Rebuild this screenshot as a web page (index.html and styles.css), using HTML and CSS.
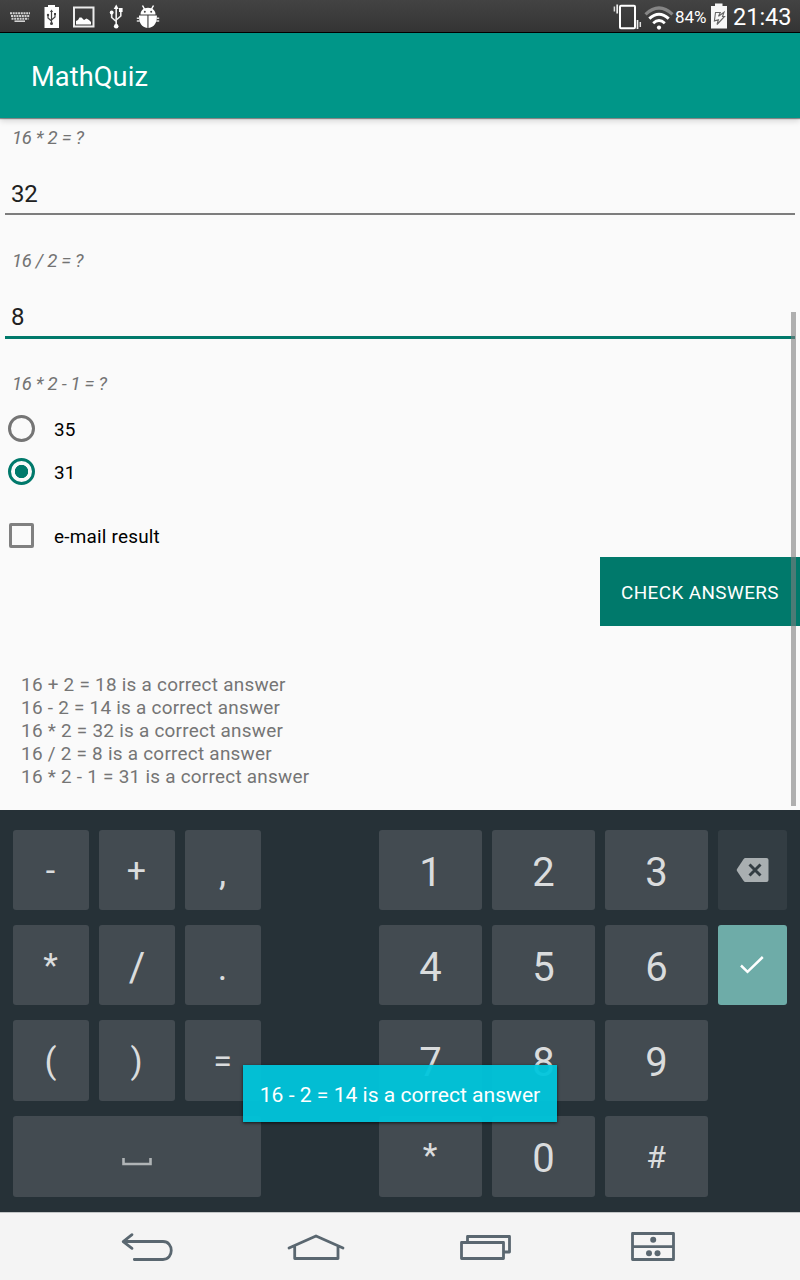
FILE: index.html
```html
<!DOCTYPE html>
<html lang="en">
<head>
<meta charset="utf-8">
<title>MathQuiz</title>
<link rel="stylesheet" href="styles.css">
</head>
<body>
<div class="screen">
  <header class="status">
    <svg class="status-icons" width="170" height="32" viewBox="0 0 170 32">
      <g stroke="#d2d2d2" stroke-width="2" fill="none">
        <path d="M10 13.200H30" stroke-dasharray="2 .7"/>
        <path d="M11 16H29.500" stroke-dasharray="2 .7"/>
        <path d="M11.500 18.700H28.500" stroke-dasharray="2 .7"/>
        <path d="M14.500 21.200H25" stroke-width="1.600"/>
      </g>
      <path d="M44.500 7h3.500V5h7v2h4v21H44.500z" fill="#fff"/>
      <g stroke="#444" fill="none" stroke-width="1.200">
        <path d="M51.500 11v13M48 15v3l3.500 3M55 14v3l-3.500 3"/>
        <path d="M49.900 12l1.600-2.500 1.600 2.500z" fill="#444" stroke="none"/>
        <circle cx="51.500" cy="23.500" r="1.500" fill="#444" stroke="none"/>
        <circle cx="48" cy="15" r="1.200" fill="#444" stroke="none"/>
        <path d="M54 13h2v2h-2z" fill="#444" stroke="none"/>
      </g>
      <rect x="74" y="7.500" width="19.500" height="19" fill="none" stroke="#ececec" stroke-width="2"/>
      <path d="M76 24.500v-3.500l2-1 1.500-2.500h2l2.500 2.500 2.500-1.500 2.500 1.500 2 2v2.500z" fill="#fff"/>
      <g stroke="#efefef" fill="none" stroke-width="1.600">
        <path d="M116.200 8v18M111.700 13v4.500l4.500 4M120.800 11v5l-4.600 4"/>
        <path d="M113.700 9l2.500-4.500 2.500 4.500z" fill="#fff" stroke="none"/>
        <circle cx="116.200" cy="26.300" r="2.300" fill="#fff" stroke="none"/>
        <circle cx="111.700" cy="12.500" r="1.900" fill="#fff" stroke="none"/>
        <path d="M119 8h3.600v4H119z" fill="#fff" stroke="none"/>
      </g>
      <path d="M140.500 14.500c0-3.800 2.800-6.700 7.500-6.700s7.500 2.900 7.500 6.700z" fill="#fff"/>
      <path d="M142.500 5.500l2.500 4.500M153.500 5.500L151 10" stroke="#fff" stroke-width="1.500"/>
      <circle cx="144.800" cy="11.800" r="1" fill="#444"/><circle cx="151.200" cy="11.800" r="1" fill="#444"/>
      <path d="M139 15.500h8.400V28c-5.500-.6-8.800-5-8.400-12.500zM148.500 15.500h8.400c.400 7.500-2.900 11.900-8.400 12.500z" fill="#fff"/>
      <path d="M136.800 18.200h3M136.800 21h3M156.200 18.200h3M156.200 21h3" stroke="#ddd" stroke-width="1.500"/>
    </svg>
    <div class="status-right">
      <svg width="64" height="32" viewBox="610 0 64 32">
        <rect x="620" y="5.800" width="15" height="22.500" rx="1" fill="none" stroke="#fff" stroke-width="2"/>
        <path d="M617.200 4.500v9M637.500 20v9" stroke="#eee" stroke-width="1.700"/>
        <path d="M614.400 6.500v5M640.300 22v5" stroke="#ddd" stroke-width="1.500"/>
        <path d="M645.500 14.300Q659 1.700 672.500 14.300" stroke="#858585" stroke-width="3.200" fill="none"/>
        <path d="M649.300 18.700Q659 9.800 668.700 18.700" stroke="#fff" stroke-width="3" fill="none"/>
        <path d="M653.200 23.200Q659 17.700 664.800 23.200" stroke="#fff" stroke-width="2.800" fill="none"/>
        <circle cx="659" cy="27.600" r="2.100" fill="#fff"/>
      </svg>
      <span class="percent">84%</span>
      <svg class="battery" width="18" height="32" viewBox="710 0 18 32">
        <path d="M711 6h4V3.500h7.500V6h4.500v22.500h-16z" fill="#f7f7f7"/>
        <path d="M715.500 12.500h4.800l-1.800 3.800 5.500-4-1.500 4.200h2l-7.500 8 1.400-4.800-4 1.200z" fill="none" stroke="#666" stroke-width="1.100"/>
      </svg>
      <span class="clock">21:43</span>
    </div>
  </header>
  <div class="appbar"><h1 class="title">MathQuiz</h1></div>
  <main class="content">
    <p class="question">16 * 2 = ?</p>
    <div class="field">32</div>
    <p class="question">16 / 2 = ?</p>
    <div class="field field-active">8</div>
    <p class="question question-last">16 * 2 - 1 = ?</p>
    <div class="option"><span class="radio"></span><span class="label">35</span></div>
    <div class="option"><span class="radio radio-on"></span><span class="label">31</span></div>
    <div class="option option-check"><span class="check"></span><span class="label">e-mail result</span></div>
    <button class="submit">CHECK ANSWERS</button>
    <div class="results">
      <div>16 + 2 = 18 is a correct answer</div>
      <div>16 - 2 = 14 is a correct answer</div>
      <div>16 * 2 = 32 is a correct answer</div>
      <div>16 / 2 = 8 is a correct answer</div>
      <div>16 * 2 - 1 = 31 is a correct answer</div>
    </div>
    <div class="scrollbar"></div>
  </main>
  <section class="keyboard">
    <div class="key sym">-</div><div class="key sym">+</div><div class="key sym sym-low">,</div><i></i>
    <div class="key">1</div><div class="key">2</div><div class="key">3</div>
    <div class="key key-dim"><svg width="34" height="26" viewBox="0 0 34 26"><path d="M9.500 1H30.500a2 2 0 0 1 2 2V23a2 2 0 0 1-2 2H9.500Q8.300 25 7.500 23.800L1 14Q.5 13 1 12L7.500 2.200Q8.300 1 9.500 1z" fill="#a9afb1"/><path d="M13.500 7.500l11 11M24.500 7.500l-11 11" stroke="#333d43" stroke-width="2.900"/></svg></div>
    <div class="key sym">*</div><div class="key sym-slash">/</div><div class="key sym sym-low">.</div><i></i>
    <div class="key">4</div><div class="key">5</div><div class="key">6</div>
    <div class="key key-enter"><svg width="24" height="18" viewBox="0 0 24 18"><path d="M1 9.500l6.500 6.300L22.800 1" fill="none" stroke="#fff" stroke-width="2.500"/></svg></div>
    <div class="key sym sym-paren">(</div><div class="key sym sym-paren">)</div><div class="key sym">=</div><i></i>
    <div class="key">7</div><div class="key">8</div><div class="key">9</div><i></i>
    <div class="key key-space"><svg width="30" height="8" viewBox="0 0 30 8"><path d="M1.500 0v6H28.500V0" fill="none" stroke="#b0b4b6" stroke-width="2.600"/></svg></div><i></i>
    <div class="key sym sym-star">*</div><div class="key">0</div><div class="key sym sym-hash">#</div>
  </section>
  <nav class="nav">
    <svg width="800" height="67" viewBox="0 1213 800 67" fill="none" stroke="#5a6770" stroke-width="2.800" stroke-linecap="round" stroke-linejoin="round">
      <path d="M132 1234.700l-8.800 6.900 8.800 6.700M123.500 1241.500H163c11 0 11 18 0 18H134.300"/>
      <path d="M289 1248l27-12 27 12M294.700 1247v11.500h43.300V1247"/>
      <path d="M467.500 1241v-4.500h42v15.500h-5M461.500 1242.500h42v16h-42z"/>
      <path d="M632.500 1233.500h41v26h-41zM633 1246.700h40"/>
      <g fill="#5a6770" stroke="none"><circle cx="653.200" cy="1239.800" r="3"/><circle cx="649" cy="1253.200" r="3"/><circle cx="657.500" cy="1253.200" r="3"/></g>
    </svg>
  </nav>
  <div class="toast">16 - 2 = 14 is a correct answer</div>
</div>
</body>
</html>
```
FILE: styles.css
```css
* { box-sizing: border-box; }
body { margin: 0; font-family: Roboto, "Liberation Sans", sans-serif; }
.screen { position: relative; width: 800px; height: 1280px; overflow: hidden; background: #fafafa; display: flex; flex-direction: column; }
.status { height: 33px; flex: none; display: flex; justify-content: space-between; background: linear-gradient(#434343, #343434); border-bottom: 1px solid #000; color: #fff; }
.status-right { display: flex; align-items: center; width: 190px; }
.status-right svg { flex: none; }
.percent { font-size: 17px; width: 36px; padding-left: 1px; padding-top: 2px; white-space: nowrap; }
.clock { font-size: 23.500px; padding-left: 5px; padding-top: 2px; }
.appbar { height: 85px; flex: none; position: relative; z-index: 1; display: flex; align-items: center; padding: 2px 0 0 31px; background: #009688; box-shadow: 0 1px 1px rgba(0,0,0,.4), 0 3px 6px rgba(0,0,0,.15); }
.title { margin: 0; font-size: 27.200px; font-weight: 400; color: #fff; letter-spacing: .1px; }
.content { position: relative; height: 692px; flex: none; display: flex; flex-direction: column; }
.question { margin: 0; height: 39px; padding: 9px 0 0 12px; font-size: 18.600px; line-height: 23px; font-style: italic; color: #737373; letter-spacing: -.32px; }
.field { height: 58px; margin: 0 5px 26px; padding: 22px 0 0 6px; font-size: 24px; line-height: 31px; color: #212121; letter-spacing: -.3px; border-bottom: 2px solid #7d7d7d; }
.field-active { height: 59px; margin-bottom: 25px; border-bottom: 3px solid #00796b; }
.question-last { height: 43px; }
.option { height: 43px; padding-left: 8px; display: flex; align-items: center; gap: 19px; font-size: 18.900px; color: #000; letter-spacing: .22px; }
.label { padding-top: 2px; }
.radio { width: 27px; height: 27px; border: 3px solid #757575; border-radius: 50%; }
.radio-on { border-color: #00796b; background: radial-gradient(circle, #00796b 6.300px, transparent 7px); }
.option-check { margin-top: 21px; }
.check { width: 25px; height: 25px; margin: 0 1px; border: 3px solid #808080; border-radius: 2px; }
.submit { align-self: flex-end; width: 200px; height: 69px; border: 0; padding: 2px 0 0; background: #00796b; color: #fff; font: 18.900px Roboto, sans-serif; letter-spacing: .4px; }
.results { padding: 47px 0 0 21px; font-size: 18.900px; line-height: 23px; color: #757575; letter-spacing: .26px; }
.scrollbar { position: absolute; left: 791px; top: 194px; width: 5px; height: 494px; background: rgba(125,125,125,.6); }
.keyboard { height: 402px; flex: none; padding: 20px 13px 15px; background: #263137; display: grid; grid-template-columns: 76px 76px 76px 98px 103px 103px 103px 69px; grid-template-rows: 80px 80px 81px 81px; column-gap: 10px; row-gap: 15px; }
.key { display: flex; align-items: center; justify-content: center; border-radius: 3px; background: #434b51; color: #dadcdd; font-size: 40px; padding-top: 4px; }
.sym { font-size: 34px; padding-top: 0; padding-right: 1px; }
.sym-low { padding-top: 6px; font-size: 36px; }
.sym-slash { font-size: 40px; padding-top: 5px; }
.sym-paren { font-size: 35px; padding-top: 1px; padding-bottom: 0; }
.sym-star { padding-bottom: 3px; }
.sym-hash { font-size: 32px; padding-top: 0; }
.key-dim { background: #333d43; padding: 0; }
.key-enter { background: #6eaca8; padding: 0 1px 0 0; }
.key-space { grid-column: span 3; padding-top: 10px; padding-right: 1px; }
.nav { flex: none; height: 68px; border-top: 1px solid #c2c5c6; background: #f4f4f4; }
.nav svg { display: block; }
.toast { position: absolute; z-index: 2; left: 243px; top: 1065px; width: 314px; height: 57px; background: rgba(0,197,219,.95); color: #fff; font-size: 21.100px; line-height: 60px; text-align: center; box-shadow: 0 1px 3px rgba(0,0,0,.7); white-space: nowrap; }
```
